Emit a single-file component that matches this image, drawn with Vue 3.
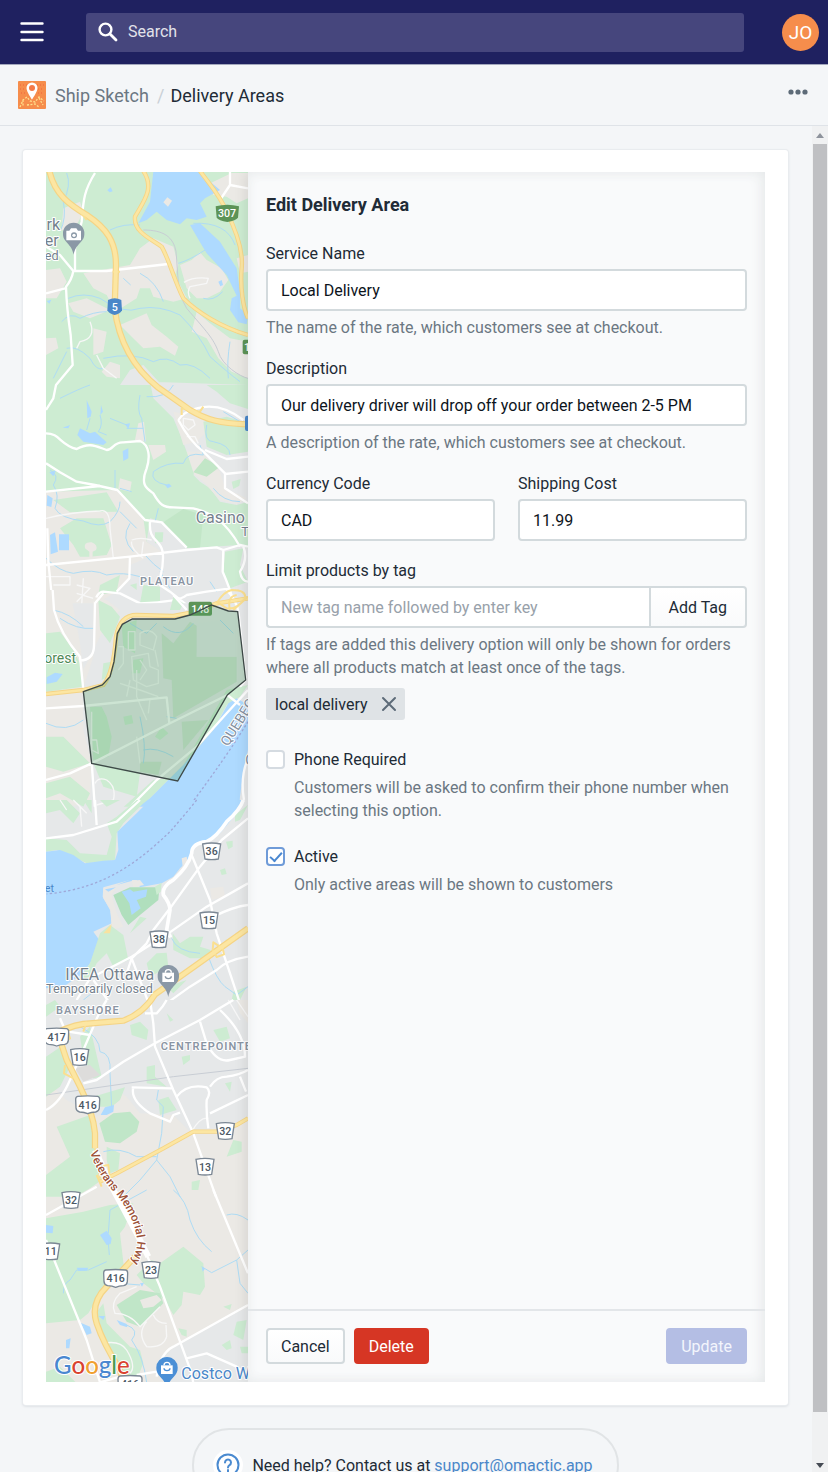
<script setup>
import { ref } from 'vue'

const search = ref('')
const service = ref('Local Delivery')
const description = ref('Our delivery driver will drop off your order between 2-5 PM')
const currency = ref('CAD')
const cost = ref('11.99')
const newTag = ref('')
const tags = ref(['local delivery'])
const phoneRequired = ref(false)
const active = ref(true)

function addTag() {
  const name = newTag.value.trim()
  if (name && !tags.value.includes(name)) tags.value.push(name)
  newTag.value = ''
}
function removeTag(name) {
  tags.value = tags.value.filter((t) => t !== name)
}

const regional = [
  { x: 515, y: 2059, t: '36' },
  { x: 507, y: 2266, t: '15' },
  { x: 357, y: 2323, t: '38' },
  { x: 119, y: 2676, t: '16' },
  { x: 556, y: 2898, t: '32' },
  { x: 495, y: 3005, t: '13' },
  { x: 93, y: 3105, t: '32' },
  { x: 32, y: 3259, t: '11' },
  { x: 333, y: 3315, t: '23' }
]
const highways = [
  { x: 50, y: 2616, t: '417' },
  { x: 143, y: 2819, t: '416' },
  { x: 227, y: 3340, t: '416' },
  { x: 270, y: 3658, t: '416' }
]
</script>

<template>
  <div class="app">
    <header class="topbar">
      <button class="menu" type="button" aria-label="Menu">
        <svg width="24" height="20" viewBox="0 0 24 20"><path d="M1.500 1.500h21M1.500 10h21M1.500 18h21" stroke="#fff" stroke-width="2.400" stroke-linecap="round" /></svg>
      </button>
      <label class="search">
        <svg width="20" height="20" viewBox="0 0 20 20" fill="none" stroke="#fff"><circle cx="7.500" cy="7.500" r="5.900" stroke-width="2.400" /><path d="M12 12l6 6" stroke-width="2.800" stroke-linecap="round" /></svg>
        <input v-model="search" type="search" placeholder="Search" aria-label="Search" />
      </label>
      <button class="avatar" type="button" aria-label="Account">JO</button>
    </header>

    <nav class="crumbs">
      <svg width="28" height="28" viewBox="0 0 28 28">
        <rect width="28" height="28" rx="1" fill="#f68d4c" />
        <path d="M2 4h7M2 8h6M19 4h7M20 8h6M3 12h5M20 12h5" stroke="#f0643c" stroke-width="1.200" stroke-dasharray="1 2" />
        <path d="M2 26l3-7 4-3 3 4 5 1 4-5 5 4M5 19v7M9 24l8-1 4 3M21 17l4 7" fill="none" stroke="#ffe08c" stroke-width="1.300" stroke-dasharray="2 1.500" />
        <path d="M14 1.500a5.500 5.500 0 0 0-5.500 5.500c0 3.800 5.500 11.500 5.500 11.500s5.500-7.700 5.500-11.500a5.500 5.500 0 0 0-5.500-5.500z" fill="#fff" />
        <circle cx="14" cy="7" r="3" fill="#f47a48" />
      </svg>
      <a href="#">Ship Sketch</a>
      <span class="slash">/</span>
      <span class="here">Delivery Areas</span>
      <button class="more" type="button" aria-label="More actions">
        <svg width="20" height="6" viewBox="0 0 20 6" fill="#5d6b78"><circle cx="3" cy="3" r="2.600" /><circle cx="10" cy="3" r="2.600" /><circle cx="17" cy="3" r="2.600" /></svg>
      </button>
    </nav>

    <div class="body">
      <main class="content">
        <section class="card">
          <div class="editor">
            <div class="map">
              <svg viewBox="18 21 606 3633" preserveAspectRatio="xMinYMin slice" role="img" aria-label="Delivery area map">
                <defs>
                  <path id="veterans" d="M150 2962Q175 3035 235 3096Q278 3155 288 3205Q300 3240 270 3300" />
                </defs>

                <!-- north -->
                <rect x="18" y="0" width="606" height="1320" fill="#cdecd2" />
                <g class="beige">
                  <path d="M130 325L270 300L300 250L340 220L400 245L415 300L405 330L440 400L400 410L340 395L330 370L300 370L290 400L250 425L225 440L200 390L160 370Z" />
                  <path d="M420 300L455 285L480 262L500 285L545 310L565 345L540 380L500 400L470 400L440 370Z" />
                  <path d="M470 440L510 475L570 520L624 530L624 640L575 620L535 580L500 520L455 500Z" />
                  <path d="M240 480L320 445L335 480L380 515L415 545L405 572L360 545L310 550L285 525Z" />
                  <path d="M85 415L140 400L210 435L150 460L100 440ZM18 315L60 310L80 350L50 400L18 400ZM18 520L48 518L55 550L18 570ZM70 130L120 110L130 140L100 200L65 195ZM185 620L210 590L240 600L240 640L200 635ZM410 35L440 25L470 60L440 80L415 70ZM500 60L575 24L624 24L624 100L590 115L560 95L520 90Z" />
                  <path d="M160 490L200 500L190 560L160 570ZM590 280L624 270L624 320L600 325Z" />
                </g>
                <path class="urban" d="M240 660L270 615L310 600L365 660ZM330 650L624 660L624 1010L590 1020L540 1010L510 970L480 950L460 930L480 900L440 860L425 820L400 760L340 700Z" />
                <g class="water">
                  <path d="M340 20L475 20L540 75L495 100L480 115L500 155L470 165L440 160L420 178L380 165L350 140L320 165L295 175L330 110Z" />
                  <path d="M450 180L480 175L540 230L590 310L600 380L600 430L624 450L620 478L595 472L570 435L575 400L590 392L560 330L500 265L485 240Z" />
                  <path d="M202 76l10-9 6 12-9 3zM535 350l10-5 4 15-8 4zM20 408l14-4-6 12z" />
                </g>
                <path d="M370 112l12-15 14 10-12 18z" class="beige" />
                <g class="stream">
                  <path d="M80 24Q95 60 70 110Q80 160 60 200M210 195Q250 175 300 180M460 175Q560 170 585 240M415 295Q450 285 495 255M250 340L272 360M300 325Q350 350 370 410M85 400Q130 380 180 400Q250 450 300 430Q360 420 420 450Q480 510 510 575Q560 620 600 650M65 470Q90 440 120 460Q160 440 200 440M80 550Q110 540 150 580Q170 620 190 610M190 580Q280 560 340 590Q380 570 420 600Q460 590 510 640M548 380Q520 410 490 400M570 530Q560 590 565 640M40 640L80 560" />
                </g>
                <path class="rail" d="M310 195C370 195 400 215 408 260C415 330 410 380 440 430C500 500 520 520 535 560C545 600 600 635 624 640" />
                <path class="road thin" d="M432 352Q460 335 505 340L500 355L450 365Q440 380 450 400M150 470Q170 520 120 530L110 550M170 570L190 610L230 640" />
                <path class="road" d="M165 24C130 80 130 110 125 170L105 250L105 318M18 245L60 270L100 318L200 318L385 297M100 318Q95 345 78 365Q80 430 92 510L98 600L48 660L40 700L18 735M18 385L75 370M624 70L570 60L540 105M570 60L570 20" />

                <!-- Plateau and Casino -->
                <g transform="translate(0 660)">
                  <path class="urban" d="M18 540L360 500L320 470L330 400L370 410L440 490L600 480L624 490V660H18Z" />
                  <path class="beige" d="M18 320L230 315L310 400L320 470L365 500L270 540L265 590L230 620L160 660L18 660ZM325 180L375 180L378 200L340 225ZM240 280L275 290L270 320L235 312ZM285 165L295 115L312 110L318 170ZM400 80L490 100L500 140L470 170L430 180ZM440 200L485 200L540 260L555 310L620 340L590 358L540 345L490 290L462 268Z" />
                  <path class="green" d="M500 0L624 0L624 72L570 55L530 20ZM490 110L560 95L624 115L624 200L560 210L500 185ZM575 290L602 282L598 302L580 312ZM40 345L200 322L235 380L90 382ZM60 430L110 400L190 400L215 480L200 510L150 515L120 515L100 480ZM345 442L370 442L368 470L345 475ZM555 500L610 490L600 540L624 590L570 610L550 560ZM180 600L240 570L230 620L175 630ZM310 600L360 605L360 650L300 655ZM270 600L290 595L290 615Z" />
                  <path d="M370 412L430 372L490 390L480 488L440 488ZM460 262L495 220L540 245L500 275Z" fill="#c2e6c7" />
                  <path class="beige" d="M135 490Q130 470 155 472Q175 480 168 495L158 500L158 520L148 520L148 500Z" />
                  <path class="water" d="M112 150L120 130L150 145L165 140L200 172L190 180L130 170ZM248 198L265 190L265 220L250 228ZM30 450L45 442L54 500L32 508ZM57 448L87 448L87 496L57 496ZM140 45L155 80L152 95L142 100ZM255 118L270 115L265 132ZM68 128L90 120L85 130ZM183 60l6 20-8 10zM28 262l20-6-8 18zM375 300l12-4 8 8-12 6zM22 330l16 10-4 26-14-4z" />
                  <path class="stream" d="M60 40Q120 10 150 0M150 100L140 135M180 90Q190 120 175 140L200 150M300 30Q290 80 305 100L315 170M320 35Q380 40 400 0M210 100L260 120M310 130L260 130M380 300Q330 290 340 260Q380 230 430 235Q440 200 490 210L480 180M500 120Q490 170 520 170Q570 180 570 210M550 80L600 110M30 255Q60 270 40 300Q60 330 45 370Q60 400 130 408Q180 430 210 410Q240 380 240 350M240 310L275 320M225 255L225 310M270 415Q240 460 280 500M315 510Q340 540 370 560M18 520Q60 560 100 565Q160 550 200 570Q250 560 300 575M355 370Q350 390 345 410M240 380L290 430M520 310Q550 350 600 350M510 590L530 620M360 560L390 610" />
                  <path class="road thin" d="M18 400Q100 380 180 378Q210 370 210 430L220 520M275 465Q300 455 335 465M275 470Q270 490 310 520M310 470L305 510M430 100L460 105L465 120L445 135L430 120ZM440 155L465 155L475 175M18 575L90 575L90 600L40 600M110 600L150 610L110 650M130 580L125 660M110 625L160 640" />
                  <path class="road" d="M18 145C60 145 60 180 110 192C150 170 170 185 200 195C220 195 220 170 250 172L300 168C330 180 330 220 320 250C300 300 320 310 340 325C360 360 370 367 400 367L460 370Q500 380 530 400Q570 430 600 485M18 235L60 262L110 290L165 300L232 315L315 405L365 412L440 488M18 320L180 303M330 410C325 470 360 460 368 500C375 560 350 590 360 600L390 620L440 660M18 540L270 515L440 495L530 487L550 495L600 480L624 485M550 495L548 560Q570 610 580 650M270 515L268 580L230 620M162 660Q170 620 190 620L240 625L300 655Q420 650 440 630L500 620L570 610M22 430L25 530L38 660M610 485Q625 520 600 560Q605 590 624 590M415 105Q430 80 470 70Q540 50 610 105M415 105Q450 170 490 200Q520 230 555 265L555 310L624 355M495 195L560 222L624 215M555 267L624 260" />
                </g>

                <!-- delivery area -->
                <g transform="translate(0 1275)">
                  <path class="urban" d="M18 40H624V660H18Z" />
                  <path class="beige" d="M18 0H90L120 160L130 240L190 120L240 60L200 30L160 20L160 200L128 300L130 420L155 520L150 640L18 660Z" />
                  <path class="green" d="M18 130L60 125L100 180L125 230L128 290L18 305ZM18 440L70 440L150 520L70 545L18 530ZM18 580L90 560L150 610L130 650L60 610L18 625ZM175 30L215 50L240 80L210 160L180 120ZM190 220L215 215L205 260L185 270ZM400 20L430 40L420 60L390 60ZM160 520L300 550L290 620L190 590ZM560 300L624 285L600 320L560 345L520 420L430 525L330 625L280 670L230 670L340 570L410 560Z" />
                  <path class="water" d="M565 340L590 325L624 345L624 670H270L330 625L430 525L520 420ZM20 262L45 248L68 252L50 275L20 282Z" />
                  <path class="urban" d="M624 480L608 560L600 620L595 680H624Z" />
                  <path d="M245 105L290 90L285 190L250 170ZM150 350L185 350L200 380L215 440L205 500L160 510ZM250 380L275 375L280 400L255 405ZM280 210L310 205L300 250L275 250ZM345 440L365 410L385 430L360 450Z" class="green" />
                  <path d="M365 130L400 160L450 95L475 110L470 200L590 200L590 275L400 385L395 270L370 265ZM425 395L505 390L430 480ZM300 515L365 515L355 555L300 545Z" fill="#d0e3d2" />
                  <path d="M470 100L590 85L590 200L470 200Z" fill="#e5e8e9" />
                  <path class="stream" d="M60 85Q110 120 160 115M40 60Q90 70 130 110M18 400Q80 430 130 390M270 100L320 130L350 100M370 110Q420 150 460 100M540 90L580 130M300 380Q320 470 310 520M310 480Q350 470 400 500M380 380L410 385" />
                  <path class="road thin" d="M235 170L250 170L250 220L235 240M265 125L285 125L285 180L265 180ZM300 130Q330 110 350 140L340 180L300 165ZM275 200L325 190L330 230L355 240L355 280L320 290L280 270ZM240 280L300 300L355 320M290 240L290 320L320 390M330 325L325 370M300 210L320 240L300 270M345 180L355 230M270 270L260 320M155 365L155 480L175 490L170 450L155 450M290 440L300 520M165 580Q175 560 200 570Q230 590 220 630L170 645" />
                  <path class="road" d="M38 0L42 60Q60 130 120 200L130 300M120 212Q160 210 162 170L165 40L190 10M18 355L130 348L380 322L388 400M18 570L90 550L155 520M155 515L165 660M262 660L350 570L470 470L560 370L624 300M155 520L390 400L562 315L600 345M400 15L440 60M560 0Q590 30 596 70L617 270L600 290M624 505Q600 560 612 630" />
                  <path class="ferry" d="M624 395Q560 500 440 660" />
                  <path class="hw-edge" d="M18 312L130 300L190 285Q220 250 228 140Q240 75 290 75L400 78L470 65L530 40L624 25" />
                  <path class="hw" d="M18 312L130 300L190 285Q220 250 228 140Q240 75 290 75L400 78L470 65L530 40L624 25" />
                  <path class="ramp" d="M530 40Q550 5 575 0Q620 0 615 25Q590 60 560 55L530 35M570 60Q560 20 590 15M580 60L624 20" />
                </g>

                <!-- river and Bayshore -->
                <g transform="translate(0 1905)">
                  <path class="urban" d="M18 20H624V620H18Z" />
                  <path class="green" d="M18 0L80 0L120 40L100 70L60 30L18 40ZM130 0H155V40ZM180 0H320L250 70L230 100L225 180L190 185L140 190L90 165L50 150L18 155L18 115L80 120L120 160L200 165L215 110L200 70L230 50L290 0H240L200 20Z" />
                  <path class="water" d="M18 155L60 150L100 165L135 190L190 182L225 180L235 150L232 95L290 40L330 0L605 0L590 40L540 100L500 125L465 130L445 180L420 205L400 230L365 250L300 262L290 240L270 240L190 262L188 290L210 330L215 370L160 395L178 420L160 475L130 520L70 560L18 565Z" />
                  <path class="beige" d="M190 265L230 260L215 285L230 340L250 380L215 390L212 330L190 295ZM275 242L300 240L312 255L280 262ZM425 175L440 170L445 200L430 215ZM510 265L550 260L555 290L515 300Z" />
                  <path d="M220 285L270 262L358 262L355 300L300 345L265 375L245 345Z" fill="#b0dfbd" />
                  <path class="water" d="M245 275L270 268L280 275L322 268L318 290L290 300L302 325L275 345L268 310ZM195 268L228 262L205 275ZM230 255L280 235L275 243Z" />
                  <path class="green" d="M180 400L210 375L250 405L265 480L220 500L200 460L170 490L150 530L110 545L150 490ZM300 350L320 355L270 400ZM345 260L365 248L362 275L350 285ZM398 400L420 430L450 410L490 410L480 440L512 450L505 475L450 475L400 450ZM320 490L350 460L380 458L385 500L330 530ZM558 125L578 122L578 140L565 148ZM540 210L555 205L560 222L545 225ZM585 45L624 15L600 60L585 65ZM555 420L580 415L575 430ZM580 575L620 560L600 600L575 600ZM380 560L440 540L400 580Z" />
                  <path d="M190 400L215 372L210 400Z" fill="#f8e2a0" />
                  <path class="stream" d="M395 415Q410 455 480 460M505 470Q530 540 555 560L590 585L624 560M130 600L180 560" />
                  <path class="ferry" d="M470 0Q430 50 390 95C300 180 200 265 20 282" />
                  <path class="road thin" d="M100 0L120 20L125 80M60 0L80 30M110 10L140 40" />
                  <path class="road" d="M18 115L100 105L230 65L300 0M165 0L170 75M624 55L545 120L480 200L390 325L340 390L320 430L275 475L260 520M455 165L510 300L530 400L600 610M624 250L500 320L385 400L275 470L150 535L110 600M624 315Q580 320 520 350M624 470Q560 480 530 510L450 560L380 610M275 475L330 620M160 540L210 610" />
                  <path class="road wide" d="M610 0Q600 30 560 65Q530 110 500 125Q455 130 455 160Q445 200 400 240Q365 260 370 285Q390 310 390 330L380 390L392 412" />
                </g>

                <!-- Centrepointe -->
                <g transform="translate(0 2505)">
                  <path class="urban" d="M18 0H624V400H18Z" />
                  <path class="beige" d="M18 240L80 300L170 350L210 330L230 270L260 290L300 340L400 345L450 395L560 380L624 360V620H18ZM590 0H624V70L600 40Z" />
                  <path class="green" d="M18 170L70 135L90 200L60 260L18 290ZM120 110L150 80L185 230L160 235L130 170ZM160 290L255 262L240 300L215 320L160 320ZM50 380L150 345L160 430L185 540L150 565L90 600L18 610L18 525L90 470ZM270 75L300 65L325 90L320 120L275 105ZM380 40L400 60L390 65ZM320 200L345 195L345 230L380 260L320 250ZM425 170L450 165L450 180L430 195ZM355 300L385 290L410 330L360 345ZM555 250L575 245L570 275ZM580 420L605 425L605 455L560 470ZM455 545L480 540L475 570L455 570ZM520 90L560 80L570 115L540 125ZM200 440L240 460L235 510L210 520L200 480ZM18 15L45 0L60 20L18 50Z" />
                  <path d="M178 370L220 340L270 335L298 365L290 395L240 430L195 425Z" fill="#c0e6c8" />
                  <path d="M105 205L150 195L180 225L130 245Z" fill="#dddcdb" />
                  <path class="water" d="M182 345L195 322L222 315L220 335L200 345Z" />
                  <path class="stream" d="M120 80Q180 110 180 155Q215 160 210 220L215 320M355 270L350 300L370 320L365 400L350 480L300 540L240 600M190 455Q240 440 290 470L350 470M350 480L390 530L430 610" />
                  <path class="rail" d="M18 285L400 230L624 205" />
                  <path class="road thin" d="M455 395Q480 350 505 355M565 0L600 60M590 0L624 50" />
                  <path class="road" d="M18 330Q60 310 90 240L130 150L160 80Q180 30 200 0M85 95L150 105M130 250L170 240L250 185L345 130L480 60L580 0M330 0L340 70L345 140L400 270L460 400L535 610M275 262L395 265M280 262Q270 300 330 340L390 365L400 345L420 338M410 290Q440 250 500 262Q515 275 500 300Q498 340 505 385M510 260Q530 230 560 230Q600 225 624 210M600 230L618 275M510 340L624 285M480 65L500 130Q530 190 570 180L615 170Q615 100 540 30M60 55L75 90M315 40L350 40Q370 20 380 0" />
                </g>

                <!-- south -->
                <g transform="translate(0 3075)">
                  <path class="beige" d="M18 20H624V590H18Z" />
                  <path class="green" d="M18 85L130 65L210 45L280 40L255 110L240 130L255 260L180 310L145 370L120 390L18 400ZM190 340L200 400L270 470L300 480L310 520L290 570H250L180 430L160 380ZM310 280L290 255L335 210L360 220L430 170L490 220L495 290L480 315L430 305L425 345L400 375L375 330ZM18 545L60 530L110 580H18ZM380 490L410 480L410 520L380 525ZM415 415L440 420L440 440L425 435ZM550 350L575 342L570 360Z" />
                  <path d="M230 345L300 300L360 310L370 340L300 410L260 395Z" fill="#c0e6c8" />
                  <path class="beige" d="M300 330L350 315L365 330L340 350L310 355Z" />
                  <path class="urban" d="M420 455L624 350V590H380L360 510Z" />
                  <path class="green" d="M590 395L620 390L610 450L580 435ZM545 465L570 450L575 475L560 480ZM600 470H624V490H605Z" />
                  <path class="water" d="M180 135L200 122L215 145L212 162L200 165ZM18 105L40 108L38 130L18 128ZM122 398L150 410L155 430L140 435ZM78 450L92 445L88 475L78 475ZM230 390L260 402L262 412L240 405ZM175 378L195 378L190 390ZM300 280L312 278L306 290ZM485 230L495 236L488 245ZM110 233L145 233L140 242L115 243Z" />
                  <path class="stream" d="M320 0L210 60L205 130M205 160L208 195M70 310Q70 280 90 270L110 240L145 240L200 215M400 0Q440 30 450 90Q470 150 515 185M485 230L515 248L590 210L624 180M590 210L600 280L624 310M560 75Q590 65 624 90M260 405Q300 420 275 450Q310 500 320 577M240 280L300 285" />
                  <path class="road thin" d="M290 290L240 310Q210 340 225 370Q270 370 300 410L360 350M340 375Q350 400 380 400M320 395Q290 430 320 470Q370 475 380 440L378 405M190 460Q240 450 260 480Q290 530 270 550" />
                  <path class="road" d="M18 150L75 290L140 450L180 577M18 75L170 -10M520 0L624 250M310 170L360 290L455 550L460 580M624 345L400 470Q360 490 350 560M440 505L500 490L590 530L624 560M290 555L350 545M180 577L240 560" />
                  <path class="road thick" d="M165 -120L215 -10L290 130L325 200" />
                </g>

                <!-- highways -->
                <g class="hw-edge">
                  <path class="major" d="M28 18C45 90 90 120 140 150C200 190 228 230 228 300L224 430C235 520 270 600 355 668L450 735C500 765 540 775 618 778" />
                  <path d="M310 18C345 70 310 110 285 155C280 200 330 220 365 245C390 290 400 340 430 400C470 440 540 485 624 510" />
                  <path d="M480 18C510 60 540 90 560 140C590 200 610 260 605 310C600 370 610 430 624 460" />
                  <path class="major" d="M624 2290L345 2488Q310 2545 250 2567L130 2577Q80 2585 18 2620" />
                  <path class="major" d="M60 2625L80 2685L120 2765Q160 2845 165 2905L165 2950" />
                  <path d="M624 2860L590 2880L530 2900L460 2900L370 2950L230 3025L180 3050" />
                  <path class="major" d="M285 3275Q230 3335 200 3365Q150 3415 170 3475Q190 3535 240 3615L250 3655" />
                </g>
                <path class="ramp" d="M116 135L140 165M218 320L240 320M425 750L425 730L480 740L490 725M518 2355L520 2332L548 2350L552 2368L530 2376ZM80 2590L90 2620L60 2640M140 2570L130 2600M75 2700L72 2725L100 2740M165 2950L180 3040M175 3005L205 3000L210 3040M170 3030L185 3065M215 3600L270 3635L240 3645" />
                <g class="hw">
                  <path class="major" d="M28 18C45 90 90 120 140 150C200 190 228 230 228 300L224 430C235 520 270 600 355 668L450 735C500 765 540 775 618 778" />
                  <path d="M310 18C345 70 310 110 285 155C280 200 330 220 365 245C390 290 400 340 430 400C470 440 540 485 624 510" />
                  <path d="M480 18C510 60 540 90 560 140C590 200 610 260 605 310C600 370 610 430 624 460" />
                  <path class="major" d="M624 2290L345 2488Q310 2545 250 2567L130 2577Q80 2585 18 2620" />
                  <path class="major" d="M60 2625L80 2685L120 2765Q160 2845 165 2905L165 2950" />
                  <path d="M624 2860L590 2880L530 2900L460 2900L370 2950L230 3025L180 3050" />
                  <path class="major" d="M285 3275Q230 3335 200 3365Q150 3415 170 3475Q190 3535 240 3615L250 3655" />
                </g>

                <!-- map labels -->
                <g transform="translate(0 1275)">
                  <rect x="446" y="35" width="70" height="42" rx="6" fill="#5d9457" />
                  <text x="481" y="69" class="sign">148</text>
                  <path d="M130 305L187 285L210 260L222 215L232 130L247 103L277 87L405 87L450 75L515 45L565 63L593 65L617 270L562 315L413 573L155 520Z" fill="#4a9d62" fill-opacity=".28" stroke="#3e4a48" stroke-width="4" />
                </g>
                <path d="M527 124Q562 114 597 124L594 158Q588 166 562 171Q536 166 530 158Z" fill="#5d9457" />
                <text x="561" y="157" class="sign">307</text>
                <path d="M204 405Q224 395 244 405L246 436Q240 447 224 450Q208 447 202 436Z" fill="#4a87c9" />
                <text x="224" y="438" class="sign">5</text>
                <rect x="608" y="524" width="40" height="44" rx="6" fill="#5d9457" />
                <text x="621" y="557" class="sign">1</text>
                <rect x="615" y="752" width="40" height="46" rx="6" fill="#4a87c9" />

                <g v-for="s in regional" :key="s.x" :transform="`translate(${s.x} ${s.y})`">
                  <path d="M-27-22Q0-28 27-22L20 23Q0 27-20 23Z" class="plate" />
                  <text y="12" class="num">{{ s.t }}</text>
                </g>
                <g v-for="s in highways" :key="s.y" :transform="`translate(${s.x} ${s.y})`">
                  <path d="M-30-25Q0-28 30-25Q36-24 36-16L35 10Q34 20 24 22Q10 23 0 27Q-10 23-24 22Q-34 20-35 10L-36-16Q-36-24-30-25Z" class="plate" />
                  <text y="12" class="num">{{ s.t }}</text>
                </g>

                <g class="place">
                  <text x="60" y="195" text-anchor="end">rk</text>
                  <text x="56" y="243" text-anchor="end">er</text>
                  <text x="56" y="284" text-anchor="end" class="note">ed</text>
                  <text x="467" y="1074">Casino</text>
                  <text x="604" y="1112" class="note">T</text>
                  <text x="76" y="2445">IKEA Ottawa</text>
                  <text x="18" y="2485" class="note">Temporarily closed</text>
                </g>
                <text x="300" y="1259" class="district">PLATEAU</text>
                <text x="48" y="2547" class="district">BAYSHORE</text>
                <text x="362" y="2655" class="district">CENTREPOINTE</text>
                <text x="108" y="1495" class="park" text-anchor="end">Forest</text>
                <text x="42" y="2182" class="lake" text-anchor="end">et</text>
                <text transform="translate(564 1746) rotate(-58)" class="province">QUEBEC</text>
                <text x="616" y="1801" class="province">O</text>
                <text class="route"><textPath href="#veterans">Veterans Memorial Hwy</textPath></text>

                <path d="M101 173a32 32 0 0 0-32 34c0 26 26 28 32 62c6-34 32-36 32-62a32 32 0 0 0-32-34z" fill="#8a98a6" />
                <path d="M79 197h9l5-7h16l5 7h9v29H79z" fill="#fff" />
                <circle cx="102" cy="211" r="9" fill="#8a98a6" /><circle cx="102" cy="211" r="5" fill="#fff" />
                <path d="M385 2400a32 32 0 0 0-32 34c0 26 26 28 32 62c6-34 32-36 32-62a32 32 0 0 0-32-34z" fill="#8a98a6" />
                <path d="M367 2423h35v28h-35z" fill="#fff" />
                <path d="M376 2423a9 9 0 0 1 18 0" fill="none" stroke="#fff" stroke-width="4" />
                <path d="M376 2434a9 7 0 0 0 18 0" fill="none" stroke="#8a98a6" stroke-width="4" />
                <path d="M381 3576a32 32 0 0 0-32 34c0 26 26 28 32 62c6-34 32-36 32-62a32 32 0 0 0-32-34z" fill="#4a8fd6" />
                <path d="M363 3601h35v26h-35z" fill="#fff" />
                <path d="M372 3601a9 9 0 0 1 18 0" fill="none" stroke="#fff" stroke-width="4" />
                <path d="M372 3610a9 7 0 0 0 18 0" fill="none" stroke="#4a8fd6" stroke-width="4" />
                <text x="424" y="3641" class="shop">Costco Wholesale</text>
                <text x="42" y="3626" class="google"><tspan fill="#4a87d0">G</tspan><tspan fill="#d9432f">o</tspan><tspan fill="#f0a030">o</tspan><tspan fill="#4a87d0">g</tspan><tspan fill="#4f9a50">l</tspan><tspan fill="#d9432f">e</tspan></text>
              </svg>
            </div>

            <form class="panel" @submit.prevent>
              <div class="fields">
                <h2>Edit Delivery Area</h2>
                <div class="field">
                  <label for="service">Service Name</label>
                  <input id="service" v-model="service" type="text" />
                  <p>The name of the rate, which customers see at checkout.</p>
                </div>
                <div class="field">
                  <label for="description">Description</label>
                  <input id="description" v-model="description" type="text" />
                  <p>A description of the rate, which customers see at checkout.</p>
                </div>
                <div class="pair">
                  <div class="field">
                    <label for="currency">Currency Code</label>
                    <input id="currency" v-model="currency" type="text" />
                  </div>
                  <div class="field">
                    <label for="cost">Shipping Cost</label>
                    <input id="cost" v-model="cost" type="text" />
                  </div>
                </div>
                <div class="field">
                  <label for="tag">Limit products by tag</label>
                  <div class="joined">
                    <input id="tag" v-model="newTag" type="text" placeholder="New tag name followed by enter key" @keydown.enter.prevent="addTag" />
                    <button class="btn" type="button" @click="addTag">Add Tag</button>
                  </div>
                  <p>If tags are added this delivery option will only be shown for orders where all products match at least once of the tags.</p>
                  <div class="tags">
                    <span v-for="t in tags" :key="t" class="tag">
                      {{ t }}
                      <button type="button" :aria-label="`Remove ${t}`" @click="removeTag(t)">
                        <svg width="16" height="16" viewBox="0 0 16 16"><path d="M2 2l12 12M14 2L2 14" stroke="#5d6b78" stroke-width="2" stroke-linecap="round" /></svg>
                      </button>
                    </span>
                  </div>
                </div>
                <div class="checks">
                  <div class="check">
                    <input id="phone" v-model="phoneRequired" type="checkbox" />
                    <label for="phone">Phone Required</label>
                    <p>Customers will be asked to confirm their phone number when selecting this option.</p>
                  </div>
                  <div class="check">
                    <input id="active" v-model="active" type="checkbox" />
                    <label for="active">Active</label>
                    <p>Only active areas will be shown to customers</p>
                  </div>
                </div>
              </div>
              <footer class="actions">
                <button class="btn" type="button">Cancel</button>
                <button class="btn danger" type="button">Delete</button>
                <button class="btn primary" type="submit" disabled>Update</button>
              </footer>
            </form>
          </div>
        </section>

        <div class="help">
          <span class="mark">
            <svg width="24" height="24" viewBox="0 0 24 24" fill="none" stroke="#4a8ad0" stroke-width="2"><circle cx="12" cy="12" r="10.500" /><path d="M9 9.500a3 3 0 1 1 4.500 2.600c-1 .6-1.500 1.200-1.500 2.400" stroke-linecap="round" /><path d="M12 17v1.500" stroke-linecap="round" /></svg>
          </span>
          <span>Need help? Contact us at <a href="mailto:support@omactic.app">support@omactic.app</a></span>
        </div>
      </main>
      <div class="scrollbar" aria-hidden="true">
        <svg width="8" height="5" viewBox="0 0 8 5"><path d="M0 5L4 0L8 5Z" fill="#8e939c" /></svg>
        <div class="thumb"></div>
        <svg width="8" height="5" viewBox="0 0 8 5"><path d="M0 0L4 5L8 0Z" fill="#454b54" /></svg>
      </div>
    </div>
  </div>
</template>

<style>
body {
  background: #f4f6f8;
}
</style>

<style scoped>
* {
  box-sizing: border-box;
}
.app {
  display: flex;
  flex-direction: column;
  height: 100vh;
  overflow: hidden;
  background: #f4f6f8;
  color: #212b36;
  font: 16px/23px Roboto, "Liberation Sans", sans-serif;
}
button,
input {
  font: inherit;
  color: inherit;
  margin: 0;
}
svg {
  display: block;
  flex: none;
}
h2,
p {
  margin: 0;
}
.topbar {
  display: grid;
  grid-template-columns: 86px 1fr 84px;
  align-items: center;
  flex: none;
  height: 65px;
  background: #1f2160;
  border-bottom: 1px solid #a3a8bd;
}
.menu,
.more,
.tag button {
  padding: 0;
  border: 0;
  background: none;
}
.menu {
  justify-self: start;
  margin-left: 20px;
}
.search {
  display: flex;
  align-items: center;
  gap: 10px;
  height: 39px;
  padding: 0 12px;
  border-radius: 3px;
  background: #46467d;
}
.search input {
  flex: 1;
  min-width: 0;
  padding: 0 0 2px;
  border: 0;
  outline: 0;
  background: none;
  appearance: none;
  color: #fff;
}
.search input::placeholder {
  color: #e2e2ea;
  opacity: 1;
}
.avatar {
  justify-self: end;
  width: 37px;
  height: 37px;
  margin-right: 9px;
  padding: 0;
  border: 0;
  border-radius: 50%;
  background: #f68d4c;
  color: #fff;
  font-size: 19px;
}
.crumbs {
  display: flex;
  align-items: center;
  flex: none;
  height: 61px;
  padding: 0 20px 0 18px;
  border-bottom: 1px solid #dfe3e8;
  font-size: 18px;
}
.crumbs a {
  margin-left: 9px;
  color: #6b7782;
  text-decoration: none;
}
.slash {
  margin: 0 6px 0 8px;
  color: #c9d0d6;
}
.more {
  margin: 0 0 6px auto;
}
.body {
  display: flex;
  flex: 1;
  min-height: 0;
}
.content {
  flex: 1;
  min-width: 0;
  padding: 24px 24px 0 23px;
  overflow: hidden;
}
.card {
  padding: 22px 23px 23px;
  border-radius: 3px;
  background: #fff;
  box-shadow: 0 0 0 1px #e9ecef, 0 1px 3px #c9ced4;
}
.editor {
  display: grid;
  grid-template-columns: 202fr 517fr;
  min-height: calc(100vh - 262px);
}
.map {
  position: relative;
  overflow: hidden;
  background: #e9e8e4;
}
.map > svg {
  position: absolute;
  inset: 0;
  width: 100%;
  height: 100%;
}
.panel {
  position: relative;
  display: flex;
  flex-direction: column;
  background: #f9fafb;
  box-shadow: 0 0 14px rgba(0, 0, 0, 0.12), inset -4px 0 16px -4px #e4e7e8, inset 0 0 12px #eef0f1;
  clip-path: inset(0 0 0 -20px);
}
.fields {
  display: flex;
  flex-direction: column;
  flex: 1;
  gap: 18px;
  padding: 21px 18px;
}
h2 {
  margin-bottom: 8px;
  font-size: 18px;
  line-height: 23px;
  font-weight: 700;
}
.field {
  display: flex;
  flex-direction: column;
}
.field input {
  width: 100%;
  height: 42px;
  min-width: 0;
  padding: 0 13px;
  border: 2px solid #d3dadd;
  border-radius: 4px;
  outline: 0;
  background: #fff;
  color: #0d141c;
}
.field > label {
  margin-bottom: 4px;
}
.field input::placeholder {
  color: #98a1aa;
  opacity: 1;
}
.field p {
  margin-top: 5px;
}
p {
  color: #6b7782;
}
.pair {
  display: grid;
  grid-template-columns: 1fr 1fr;
  gap: 23px;
}
.joined {
  display: flex;
}
.joined input {
  flex: 1;
  border-right: 0;
  border-radius: 4px 0 0 4px;
}
.btn {
  height: 36px;
  padding: 0 13px;
  border: 2px solid #d3dadd;
  border-radius: 4px;
  background: linear-gradient(#fff, #f9fafb);
}
.joined .btn {
  height: 42px;
  padding: 0 18px;
  border-radius: 0 4px 4px 0;
}
.tags {
  display: flex;
  flex-wrap: wrap;
  gap: 8px;
  margin-top: 9px;
}
.tag {
  display: flex;
  align-items: center;
  gap: 13px;
  height: 32px;
  padding: 0 8px 0 9px;
  border-radius: 3px;
  background: #dfe3e6;
}
.checks {
  display: flex;
  flex-direction: column;
  gap: 23px;
  margin-top: 10px;
}
.check {
  display: grid;
  grid-template-columns: 19px 1fr;
  column-gap: 9px;
  row-gap: 5px;
  align-items: center;
}
.check p {
  grid-column: 2;
}
.check input {
  appearance: none;
  width: 19px;
  height: 19px;
  border: 2px solid #d5dbe1;
  border-radius: 4px;
  background: #fff;
}
.check input:checked {
  display: grid;
  place-items: center;
  border-color: #6f9bd8;
}
.check input:checked::after {
  content: "";
  width: 10px;
  height: 5px;
  margin-bottom: 3px;
  border: solid #4a87d0;
  border-width: 0 0 2px 2px;
  transform: rotate(-48deg);
}
.actions {
  display: flex;
  gap: 9px;
  padding: 17px 18px 18px;
  border-top: 2px solid #e3e6e9;
}
.danger {
  border-color: #d63624;
  background: #d63624;
  color: #fff;
}
.primary {
  margin-left: auto;
  border-color: #b4bee4;
  background: #b4bee4;
  color: #f3f5fc;
}
.help {
  display: flex;
  align-items: center;
  gap: 9px;
  width: max-content;
  height: 74px;
  margin: 23px auto 0;
  padding: 0 24px 0 19px;
  border: 2px solid #e1e4e6;
  border-radius: 37px;
}
.mark {
  padding: 3px;
  border-radius: 50%;
  background: #fff;
}
.help a {
  color: #4a87c9;
  text-decoration: none;
}
.scrollbar {
  display: flex;
  flex-direction: column;
  align-items: center;
  flex: none;
  gap: 6px;
  width: 16px;
  padding: 7px 0 4px;
  background: #f0f1f2;
}
.thumb {
  width: 14px;
  flex: 0 0 95%;
  background: #bfc0c3;
}
.scrollbar svg:last-child {
  margin-top: auto;
}

.green {
  fill: #cdecd2;
}
.beige {
  fill: #ebe9e5;
}
.urban {
  fill: #e6e8e9;
}
.water {
  fill: #aedaff;
}
.stream,
.rail,
.road,
.ferry,
.ramp,
.hw,
.hw-edge {
  fill: none;
  stroke-linejoin: round;
}
.stream {
  stroke: #aedcf5;
  stroke-width: 3;
}
.rail {
  stroke: #c8cdd4;
  stroke-width: 3;
}
.ferry {
  stroke: #9fa8d8;
  stroke-width: 4;
  stroke-dasharray: 7 7;
}
.road {
  stroke: #fff;
  stroke-width: 7;
}
.road.thin {
  stroke: #f7f7f7;
  stroke-width: 4;
}
.road.wide {
  stroke-width: 11;
}
.road.thick {
  stroke-width: 18;
}
.ramp {
  stroke: #fadf90;
  stroke-width: 6;
}
.hw-edge {
  stroke: #f5d485;
  stroke-width: 13;
}
.hw {
  stroke: #fce6a2;
  stroke-width: 8;
}
.hw-edge .major {
  stroke-width: 19;
}
.hw .major {
  stroke-width: 12;
}
.plate {
  fill: #fff;
  stroke: #7b8794;
  stroke-width: 4;
}
.num,
.sign {
  font-size: 32px;
  font-weight: 500;
  text-anchor: middle;
  fill: #4b5763;
}
.sign {
  fill: #fff;
}
.place,
.district,
.park,
.lake,
.province,
.route,
.shop,
.google {
  paint-order: stroke;
  stroke: #fff;
  stroke-width: 6px;
  stroke-linejoin: round;
}
.place {
  font-size: 48px;
  fill: #75818d;
}
.place .note {
  font-size: 38px;
}
.district {
  font-size: 33px;
  font-weight: 600;
  letter-spacing: 3px;
  fill: #8a95a3;
}
.park {
  font-size: 42px;
  fill: #4f8a56;
}
.lake {
  font-size: 32px;
  stroke: none;
  fill: #4a87c9;
}
.province {
  font-size: 42px;
  fill: #8490a0;
}
.route {
  font-size: 35px;
  font-weight: 500;
  fill: #9c5238;
}
.shop {
  font-size: 48px;
  fill: #4a87c9;
}
.google {
  font: 500 72px Lato, sans-serif;
}
</style>
